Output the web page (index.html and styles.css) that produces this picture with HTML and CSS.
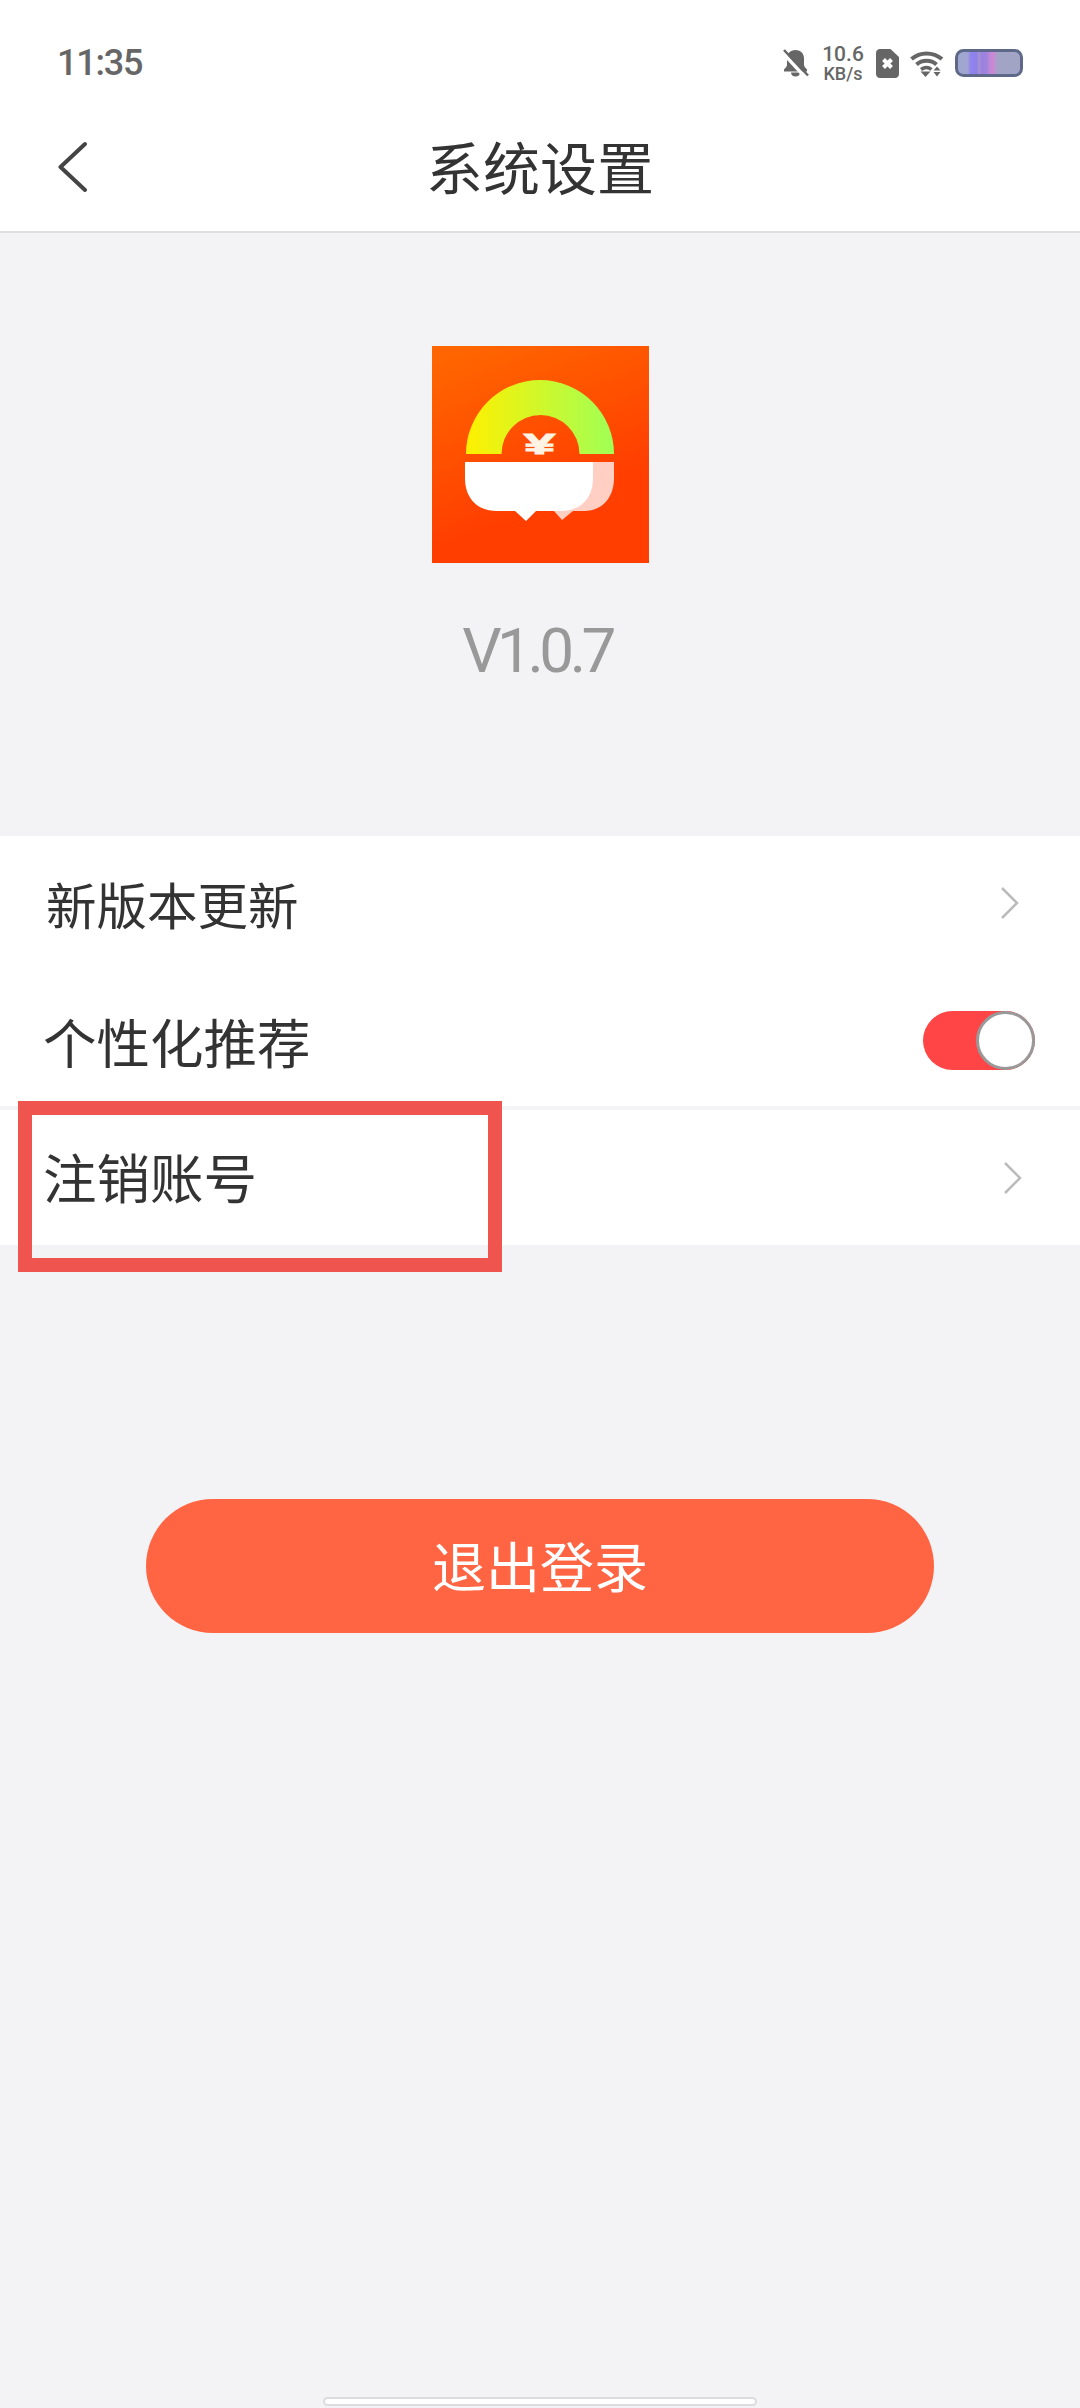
FILE: index.html
```html
<!DOCTYPE html>
<html>
<head>
    <link rel="stylesheet" href="styles.css">
</head>
<body>
<div class="page">
    <div class="top-bar">
        <div class="status-bar">
            <div class="time">11:35</div>
            <div class="status-icons">
                <svg class="icon-bell" width="27" height="28" viewBox="0 0 27 28">
                    <path d="M13.500 1c5.500 0 8.500 3.800 8.500 8.500v6c0 2 1.500 3.500 3 5v2H2V20.500c1.500-1.500 3-3 3-5v-6C5 4.800 8 1 13.500 1z" fill="#666"/>
                    <path d="M9 23.500h9c0 2.500-2 4-4.500 4S9 26 9 23.500z" fill="#666"/>
                    <path d="M0 3l23 25" stroke="#fff" stroke-width="3.500"/>
                    <path d="M2 1l24 25.500" stroke="#666" stroke-width="2.500"/>
                </svg>
                <div class="speed">
                    <div class="speed-num">10.6</div>
                    <div class="speed-unit">KB/s</div>
                </div>
                <svg class="icon-sim" width="24" height="29" viewBox="0 0 24 29">
                    <path d="M4 0h10.500L23 8v17c0 2-1.500 4-4 4H4c-2.500 0-4-2-4-4V4c0-2 1.500-4 4-4z" fill="#666"/>
                    <path d="M7.500 10.500l8 8M15.500 10.500l-8 8" stroke="#fff" stroke-width="4"/>
                </svg>
                <svg class="icon-wifi" width="34" height="27" viewBox="0 0 34 27">
                    <path d="M1.500 9C10 1.500 23 1.500 32 9" fill="none" stroke="#666" stroke-width="4"/>
                    <path d="M6.500 14.500C12 9.500 21 9.500 26.500 14.500" fill="none" stroke="#666" stroke-width="4"/>
                    <path d="M11 19.500c3.500-2.500 7.500-2.500 10.500 0" fill="none" stroke="#666" stroke-width="3.500"/>
                    <path d="M10.500 21.500h10L15.500 27z" fill="#666"/>
                    <path d="M27 16.500l3.500 4h-7zM23.500 22h7L27 26.500z" fill="#666"/>
                </svg>
                <svg class="icon-battery" width="68" height="28" viewBox="0 0 68 28">
                    <defs>
                        <linearGradient id="battery-fill" x1="0" y1="0" x2="1" y2="0">
                            <stop offset="0" stop-color="#9fa8cc"/>
                            <stop offset="0.17" stop-color="#a0a4d2"/>
                            <stop offset="0.22" stop-color="#8f83ee"/>
                            <stop offset="0.31" stop-color="#9080e8"/>
                            <stop offset="0.35" stop-color="#a493d0"/>
                            <stop offset="0.39" stop-color="#9c80e0"/>
                            <stop offset="0.47" stop-color="#a184dc"/>
                            <stop offset="0.51" stop-color="#c088d8"/>
                            <stop offset="0.57" stop-color="#cc88d4"/>
                            <stop offset="0.63" stop-color="#a2a4c6"/>
                            <stop offset="1" stop-color="#a1a4c4"/>
                        </linearGradient>
                    </defs>
                    <rect x="1.500" y="1.500" width="65" height="25" rx="7" fill="url(#battery-fill)" stroke="#5e6889" stroke-width="3"/>
                </svg>
            </div>
        </div>
        <div class="nav-bar">
            <div class="nav-side">
                <svg width="30" height="54" viewBox="0 0 30 54">
                    <path d="M28 4L3.500 27 28 50" fill="none" stroke="#444" stroke-width="4" stroke-linecap="round" stroke-linejoin="round"/>
                </svg>
            </div>
            <div class="nav-title">系统设置</div>
            <div class="nav-side"></div>
        </div>
    </div>

    <div class="about">
        <svg class="logo" width="217" height="217" viewBox="0 0 217 217">
            <defs>
                <linearGradient id="logo-bg" x1="0.2" y1="0" x2="0.5" y2="0.75">
                    <stop offset="0" stop-color="#ff6500"/>
                    <stop offset="1" stop-color="#ff3e00"/>
                </linearGradient>
                <linearGradient id="logo-arc" x1="0" y1="0" x2="1" y2="0">
                    <stop offset="0" stop-color="#fff000"/>
                    <stop offset="1" stop-color="#a0ff55"/>
                </linearGradient>
            </defs>
            <rect width="217" height="217" fill="url(#logo-bg)"/>
            <path d="M34 108a74 74 0 0 1 148 0h-34.500a39 39 0 0 0-78 0z" fill="url(#logo-arc)"/>
            <path d="M70 116h112v16c0 20-12 33-30 33h-11l-11 9-8-9H70z" fill="#ffcfc4"/>
            <path d="M33 116h128v16c0 20-12 33-32 33h-25l-10 10-11-10H65c-20 0-32-13-32-33z" fill="#fff"/>
            <text class="logo-yen" x="107.500" y="108" textLength="31" lengthAdjust="spacingAndGlyphs">¥</text>
        </svg>
        <div class="version">V1.0.7</div>
    </div>

    <div class="menu">
        <div class="menu-row row-update">
            <div class="row-label label-small">新版本更新</div>
            <svg class="chevron" width="19" height="32" viewBox="0 0 19 32">
                <path d="M2 1l15 15L2 31" fill="none" stroke="#bbb" stroke-width="2.500"/>
            </svg>
        </div>
        <div class="menu-row row-switch">
            <div class="row-label">个性化推荐</div>
            <div class="switch"><div class="switch-knob"></div></div>
        </div>
        <div class="menu-row row-cancel">
            <div class="row-label label-raised">注销账号</div>
            <svg class="chevron" width="19" height="32" viewBox="0 0 19 32">
                <path d="M2 1l15 15L2 31" fill="none" stroke="#bbb" stroke-width="2.500"/>
            </svg>
            <div class="highlight-box"></div>
        </div>
    </div>

    <div class="logout-wrap">
        <div class="logout-button">退出登录</div>
    </div>

    <div class="home-indicator"></div>
</div>
</body>
</html>
```

FILE: styles.css
```css
html, body {
    margin: 0;
    padding: 0;
}

body {
    background-color: #f3f3f6;
    font-family: "Noto Sans CJK SC", "Noto Sans", sans-serif;
    color: #333;
}

.page {
    display: flex;
    flex-direction: column;
    height: 2408px;
    box-sizing: border-box;
    overflow: hidden;
}

.top-bar {
    background-color: #fff;
    border-bottom: 2px solid #dfdfe2;
    height: 233px;
    box-sizing: border-box;
}

.status-bar {
    display: flex;
    align-items: center;
    justify-content: space-between;
    height: 62px;
    padding: 32px 57px 0 57px;
}

.time {
    font-family: Roboto, sans-serif;
    font-size: 36px;
    font-weight: 500;
    color: #666;
    letter-spacing: -1.200px;
}

.status-icons {
    display: flex;
    align-items: center;
}

.icon-bell {
    margin-right: 12px;
}

.speed {
    display: flex;
    flex-direction: column;
    align-items: center;
    width: 44px;
    margin-right: 11px;
    font-family: Roboto, sans-serif;
    font-weight: 500;
    color: #666;
}

.speed-num {
    font-size: 21px;
    line-height: 20px;
}

.speed-unit {
    font-size: 18px;
    line-height: 19px;
}

.icon-sim {
    margin-right: 10px;
}

.icon-wifi {
    margin-right: 11px;
}

.nav-bar {
    display: grid;
    grid-template-columns: 1fr auto 1fr;
    align-items: center;
    height: 139px;
    box-sizing: border-box;
    padding: 7px 57px 0 57px;
}

.nav-title {
    font-size: 57px;
    line-height: 80px;
    padding-bottom: 4px;
    color: #333;
}

.nav-side {
    display: flex;
    align-items: center;
}

.about {
    display: flex;
    flex-direction: column;
    align-items: center;
    height: 603px;
    box-sizing: border-box;
    padding-top: 113px;
}

.logo {
    display: block;
}

.logo-yen {
    font-family: "Liberation Sans", sans-serif;
    font-size: 30px;
    font-weight: bold;
    fill: #fff3e4;
    stroke: #fff3e4;
    stroke-width: 1.200px;
    text-anchor: middle;
}

.version {
    margin-top: 50px;
    padding-right: 6px;
    font-family: Roboto, sans-serif;
    font-size: 62px;
    line-height: 76px;
    letter-spacing: -4.500px;
    color: #999;
}

.menu {
    background-color: #fff;
}

.menu-row {
    display: flex;
    align-items: center;
    justify-content: space-between;
    box-sizing: border-box;
}

.row-update {
    height: 138px;
    padding: 0 61px 5px 46px;
}

.row-switch {
    height: 132px;
    padding: 1px 45px 0 43px;
}

.row-cancel {
    position: relative;
    height: 139px;
    padding: 0 58px 0 43px;
    border-top: 4px solid #f4f4f6;
}

.row-label {
    font-size: 53.500px;
    line-height: 70px;
    color: #333;
}

.label-small {
    font-size: 50.500px;
}

.label-raised {
    margin-bottom: 3px;
}

.chevron {
    display: block;
}

.switch {
    display: flex;
    justify-content: flex-end;
    width: 112px;
    height: 59px;
    border-radius: 30px;
    background-color: #ff4545;
}

.switch-knob {
    width: 59px;
    height: 59px;
    box-sizing: border-box;
    border-radius: 50%;
    border: 3px solid #999;
    background-color: #fff;
}

.highlight-box {
    position: absolute;
    left: 18px;
    top: -9px;
    width: 484px;
    height: 171px;
    box-sizing: border-box;
    border: 14px solid #f0544f;
}

.logout-wrap {
    display: flex;
    justify-content: center;
    margin-top: 254px;
}

.logout-button {
    display: flex;
    align-items: center;
    justify-content: center;
    width: 788px;
    height: 134px;
    box-sizing: border-box;
    padding-bottom: 3px;
    border-radius: 67px;
    background-color: #ff6543;
    color: #fff;
    font-size: 54px;
}

.home-indicator {
    width: 434px;
    height: 9px;
    margin: auto auto 2px auto;
    box-sizing: border-box;
    border: 2px solid #dcdce0;
    border-radius: 5px;
    background-color: #fff;
}
```
